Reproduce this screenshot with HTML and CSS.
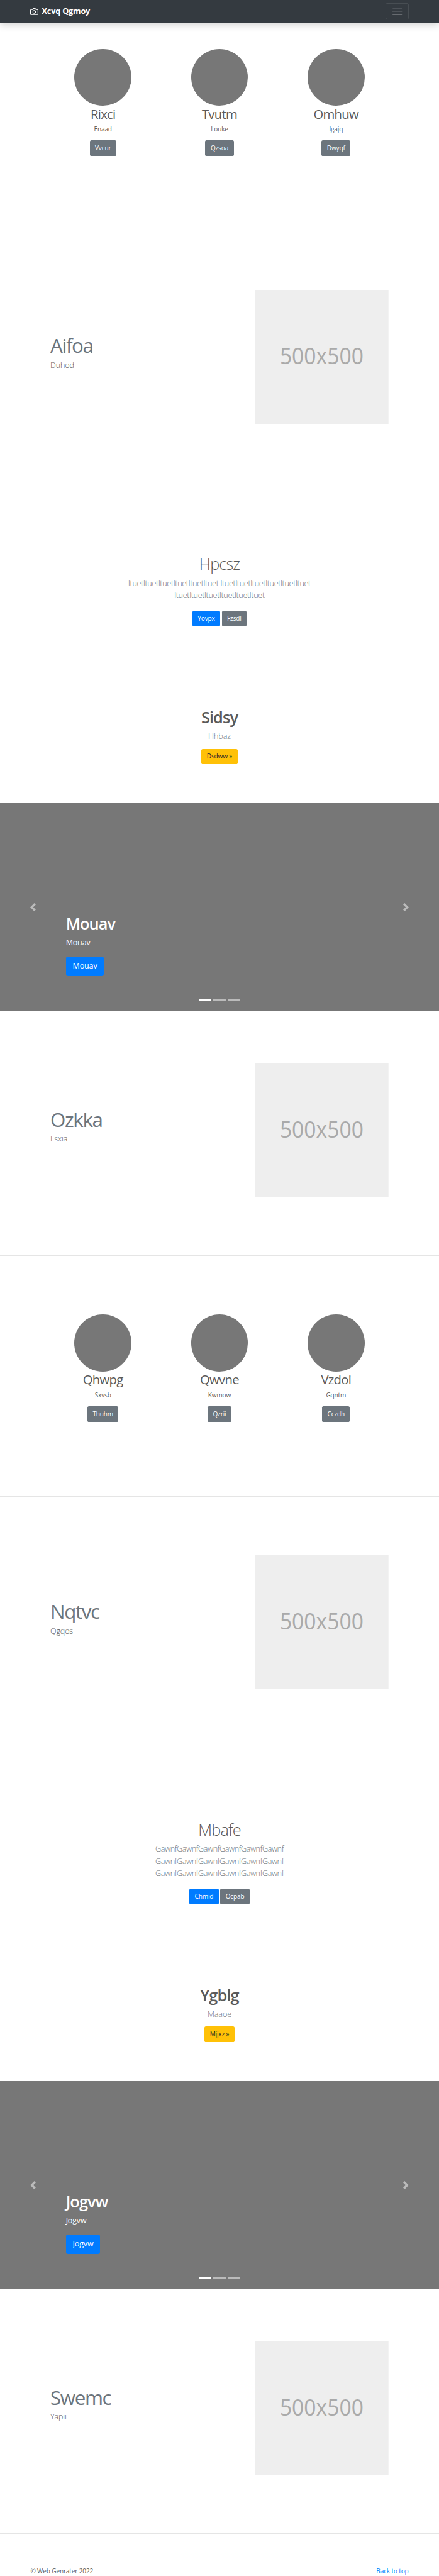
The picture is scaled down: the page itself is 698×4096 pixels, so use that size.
FILE: index.html
```html
<!DOCTYPE html>
<html lang="en">
<head>
<meta charset="utf-8">
<title>Xcvq Qgmoy</title>
<link rel="stylesheet" href="styles.css">
</head>
<body>
<header class="navbar">
  <a class="brand"><svg class="brand-icon" viewBox="0 0 24 24" fill="none" stroke="currentColor" stroke-width="2" stroke-linecap="round" stroke-linejoin="round"><path d="M23 19a2 2 0 0 1-2 2H3a2 2 0 0 1-2-2V8a2 2 0 0 1 2-2h4l2-3h6l2 3h4a2 2 0 0 1 2 2z"/><circle cx="12" cy="13" r="4"/></svg><strong>Xcvq Qgmoy</strong></a>
  <button class="toggler" aria-label="Menu"><svg viewBox="0 0 30 30" stroke="rgba(255,255,255,.5)" stroke-width="2" stroke-linecap="round" stroke-miterlimit="10"><path d="M4 7h22M4 15h22M4 23h22"/></svg></button>
</header>
<main>
  <section class="trio trio-first">
    <div class="person"><div class="avatar"></div><h2>Rixci</h2><p>Enaad</p><a class="btn secondary">Vvcur</a></div>
    <div class="person"><div class="avatar"></div><h2>Tvutm</h2><p>Louke</p><a class="btn secondary">Qzsoa</a></div>
    <div class="person"><div class="avatar"></div><h2>Omhuw</h2><p>Igajq</p><a class="btn secondary">Dwyqf</a></div>
  </section>
  <section class="feature">
    <div class="feature-text"><h2>Aifoa</h2><p>Duhod</p></div>
    <svg class="placeholder" viewBox="0 0 329 330"><rect width="329" height="330"/><text x="61.5" y="182" textLength="206" lengthAdjust="spacingAndGlyphs">500x500</text></svg>
  </section>
  <section class="intro">
    <h1 class="light">Hpcsz</h1>
    <p class="tight">ltuetltuetltuetltuetltuetltuet ltuetltuetltuetltuetltuetltuet<br>ltuetltuetltuetltuetltuetltuet</p>
    <div class="actions"><a class="btn primary">Yovpx</a><a class="btn secondary">Fzsdl</a></div>
    <h1 class="bold">Sidsy</h1>
    <p>Hhbaz</p>
    <div class="actions single"><a class="btn warning">Dsdww »</a></div>
  </section>
  <section class="carousel">
    <svg class="arrow" viewBox="0 0 8 8"><path d="M5.25 0l-4 4 4 4 1.5-1.5-2.5-2.5 2.5-2.5-1.5-1.5z"/></svg>
    <div class="caption"><h1>Mouav</h1><p>Mouav</p><a class="btn primary large">Mouav</a></div>
    <svg class="arrow" viewBox="0 0 8 8"><path d="M2.75 0l-1.5 1.5 2.5 2.5-2.5 2.5 1.5 1.5 4-4-4-4z"/></svg>
    <div class="indicators"><i class="active"></i><i></i><i></i></div>
  </section>
  <section class="feature compact">
    <div class="feature-text"><h2>Ozkka</h2><p>Lsxia</p></div>
    <svg class="placeholder" viewBox="0 0 329 330"><rect width="329" height="330"/><text x="61.5" y="182" textLength="206" lengthAdjust="spacingAndGlyphs">500x500</text></svg>
  </section>
  <section class="trio">
    <div class="person"><div class="avatar"></div><h2>Qhwpg</h2><p>Sxvsb</p><a class="btn secondary">Thuhm</a></div>
    <div class="person"><div class="avatar"></div><h2>Qwvne</h2><p>Kwmow</p><a class="btn secondary">Qzrii</a></div>
    <div class="person"><div class="avatar"></div><h2>Vzdoi</h2><p>Gqntm</p><a class="btn secondary">Cczdh</a></div>
  </section>
  <section class="feature">
    <div class="feature-text"><h2>Nqtvc</h2><p>Qgqos</p></div>
    <svg class="placeholder" viewBox="0 0 329 330"><rect width="329" height="330"/><text x="61.5" y="182" textLength="206" lengthAdjust="spacingAndGlyphs">500x500</text></svg>
  </section>
  <section class="intro tall">
    <h1 class="light">Mbafe</h1>
    <p class="tighter">GawnfGawnfGawnfGawnfGawnfGawnf<br>GawnfGawnfGawnfGawnfGawnfGawnf<br>GawnfGawnfGawnfGawnfGawnfGawnf</p>
    <div class="actions"><a class="btn primary">Chmid</a><a class="btn secondary">Ocpab</a></div>
    <h1 class="bold">Ygblg</h1>
    <p>Maaoe</p>
    <div class="actions single"><a class="btn warning">Mjjxz »</a></div>
  </section>
  <section class="carousel">
    <svg class="arrow" viewBox="0 0 8 8"><path d="M5.25 0l-4 4 4 4 1.5-1.5-2.5-2.5 2.5-2.5-1.5-1.5z"/></svg>
    <div class="caption"><h1>Jogvw</h1><p>Jogvw</p><a class="btn primary large">Jogvw</a></div>
    <svg class="arrow" viewBox="0 0 8 8"><path d="M2.75 0l-1.5 1.5 2.5 2.5-2.5 2.5 1.5 1.5 4-4-4-4z"/></svg>
    <div class="indicators"><i class="active"></i><i></i><i></i></div>
  </section>
  <section class="feature compact">
    <div class="feature-text"><h2>Swemc</h2><p>Yapii</p></div>
    <svg class="placeholder" viewBox="0 0 329 330"><rect width="329" height="330"/><text x="61.5" y="182" textLength="206" lengthAdjust="spacingAndGlyphs">500x500</text></svg>
  </section>
</main>
<footer class="footer"><span>© Web Genrater 2022</span><a>Back to top</a></footer>
</body>
</html>
```

FILE: styles.css
```css
:root {
  --u: .646px; /* base layout unit */
}

* {
  box-sizing: border-box;
}

body {
  margin: 0;
  height: 4096px;
  overflow: hidden;
  background: #fff;
  color: #5a5a5a;
  font-family: "Open Sans", "Noto Sans", sans-serif;
  font-size: calc(15.6 * var(--u));
  line-height: calc(24 * var(--u));
  letter-spacing: -.015em;
}

h1, h2, p {
  margin: 0;
}

h1, h2 {
  letter-spacing: -.035em;
}

.navbar {
  position: relative;
  display: flex;
  align-items: center;
  justify-content: space-between;
  height: calc(56 * var(--u));
  padding: 0 calc(75 * var(--u));
  background: #343a40;
  box-shadow: 0 calc(8 * var(--u)) calc(16 * var(--u)) rgba(0, 0, 0, .15);
}

.brand {
  display: flex;
  align-items: center;
  gap: calc(8 * var(--u));
  color: #fff;
  font-size: calc(19.6 * var(--u));
}

.brand-icon {
  width: calc(20 * var(--u));
  height: calc(20 * var(--u));
}

.toggler {
  display: flex;
  align-items: center;
  justify-content: center;
  width: calc(56 * var(--u));
  height: calc(40 * var(--u));
  padding: 0;
  border: 1px solid rgba(255, 255, 255, .1);
  border-radius: calc(4 * var(--u));
  background: none;
}

.toggler svg {
  width: calc(30 * var(--u));
  height: calc(30 * var(--u));
}

.trio {
  display: flex;
  height: calc(593 * var(--u));
  padding: calc(144 * var(--u)) calc(110 * var(--u)) 0;
  border-bottom: 1px solid #e5e5e5;
}

.trio-first {
  height: calc(513 * var(--u));
  padding-top: calc(64 * var(--u));
}

.person {
  flex: 1;
  display: flex;
  flex-direction: column;
  align-items: center;
}

.avatar {
  width: calc(140 * var(--u));
  height: calc(140 * var(--u));
  border-radius: 50%;
  background: #777;
}

.person h2 {
  margin-top: calc(1 * var(--u));
  font-size: calc(31.4 * var(--u));
  font-weight: 400;
  line-height: calc(38 * var(--u));
}

.person p {
  margin: calc(8 * var(--u)) 0 calc(15 * var(--u));
}

.btn {
  display: inline-flex;
  align-items: center;
  height: calc(38 * var(--u));
  padding: 0 calc(13 * var(--u));
  border-radius: calc(4 * var(--u));
  color: #fff;
}

.primary { background: #007bff; }
.secondary { background: #6c757d; }
.warning { background: #ffc107; color: #212529; }

.large {
  height: calc(48 * var(--u));
  padding: 0 calc(17 * var(--u));
  border-radius: calc(5 * var(--u));
  font-size: calc(19.4 * var(--u));
}

.feature {
  display: flex;
  justify-content: space-between;
  align-items: flex-start;
  height: calc(618.5 * var(--u));
  padding: calc(144 * var(--u)) calc(124 * var(--u)) 0;
  border-bottom: 1px solid #e5e5e5;
}

.compact {
  height: calc(602 * var(--u));
  padding-top: calc(128 * var(--u));
}

.feature-text {
  padding-top: calc(108 * var(--u));
}

.feature h2 {
  color: #6c757d;
  font-size: calc(48.5 * var(--u));
  font-weight: 400;
  letter-spacing: -.045em;
  line-height: calc(60 * var(--u));
}

.feature p {
  margin-top: calc(3 * var(--u));
  font-size: calc(19.4 * var(--u));
  font-weight: 300;
  line-height: calc(30 * var(--u));
}

.placeholder {
  width: calc(329.5 * var(--u));
  height: calc(330 * var(--u));
}

.placeholder rect { fill: #eee; }
.placeholder text { fill: #aaa; font-size: 57px; letter-spacing: 0; }

.intro {
  display: flex;
  flex-direction: column;
  align-items: center;
  height: calc(790 * var(--u));
  padding-top: calc(177 * var(--u));
  text-align: center;
}

.intro.tall {
  height: calc(820 * var(--u));
}

.intro h1 {
  font-size: calc(39.2 * var(--u));
  line-height: calc(48 * var(--u));
}

.intro .light { font-weight: 300; }
.intro .bold { font-weight: 600; }

.intro p {
  margin: calc(8 * var(--u)) 0 calc(-1 * var(--u));
  color: #6c757d;
  font-size: calc(19.6 * var(--u));
  font-weight: 300;
  line-height: calc(30 * var(--u));
}

.intro .tight { letter-spacing: -.029em; }
.intro .tighter { letter-spacing: -.036em; }

.actions {
  display: flex;
  gap: calc(4 * var(--u));
  margin: calc(24 * var(--u)) 0 calc(200.5 * var(--u));
}

.single {
  margin: calc(16 * var(--u)) 0 0;
}

.carousel {
  position: relative;
  display: flex;
  align-items: center;
  justify-content: space-between;
  height: calc(512 * var(--u));
  padding: 0 calc(71 * var(--u));
  background: #777;
  color: #fff;
}

.arrow {
  width: calc(20 * var(--u));
  height: calc(20 * var(--u));
  fill: #fff;
  opacity: .5;
}

.caption {
  flex: 1;
  align-self: flex-start;
  padding: calc(272.5 * var(--u)) calc(71 * var(--u)) 0;
}

.caption h1 {
  font-size: calc(39.2 * var(--u));
  font-weight: 600;
  line-height: calc(48 * var(--u));
}

.caption p {
  margin: calc(7 * var(--u)) 0 calc(19 * var(--u));
  font-size: calc(19.4 * var(--u));
  line-height: calc(30 * var(--u));
}

.indicators {
  position: absolute;
  right: 0;
  bottom: calc(26 * var(--u));
  left: 0;
  display: flex;
  justify-content: center;
  gap: calc(6 * var(--u));
}

.indicators i {
  width: calc(30 * var(--u));
  height: calc(3 * var(--u));
  background: rgba(255, 255, 255, .5);
}

.indicators .active {
  background: #fff;
}

.footer {
  display: flex;
  justify-content: space-between;
  padding: calc(80 * var(--u)) calc(75 * var(--u)) 0;
}

.footer a {
  color: #007bff;
}
```
